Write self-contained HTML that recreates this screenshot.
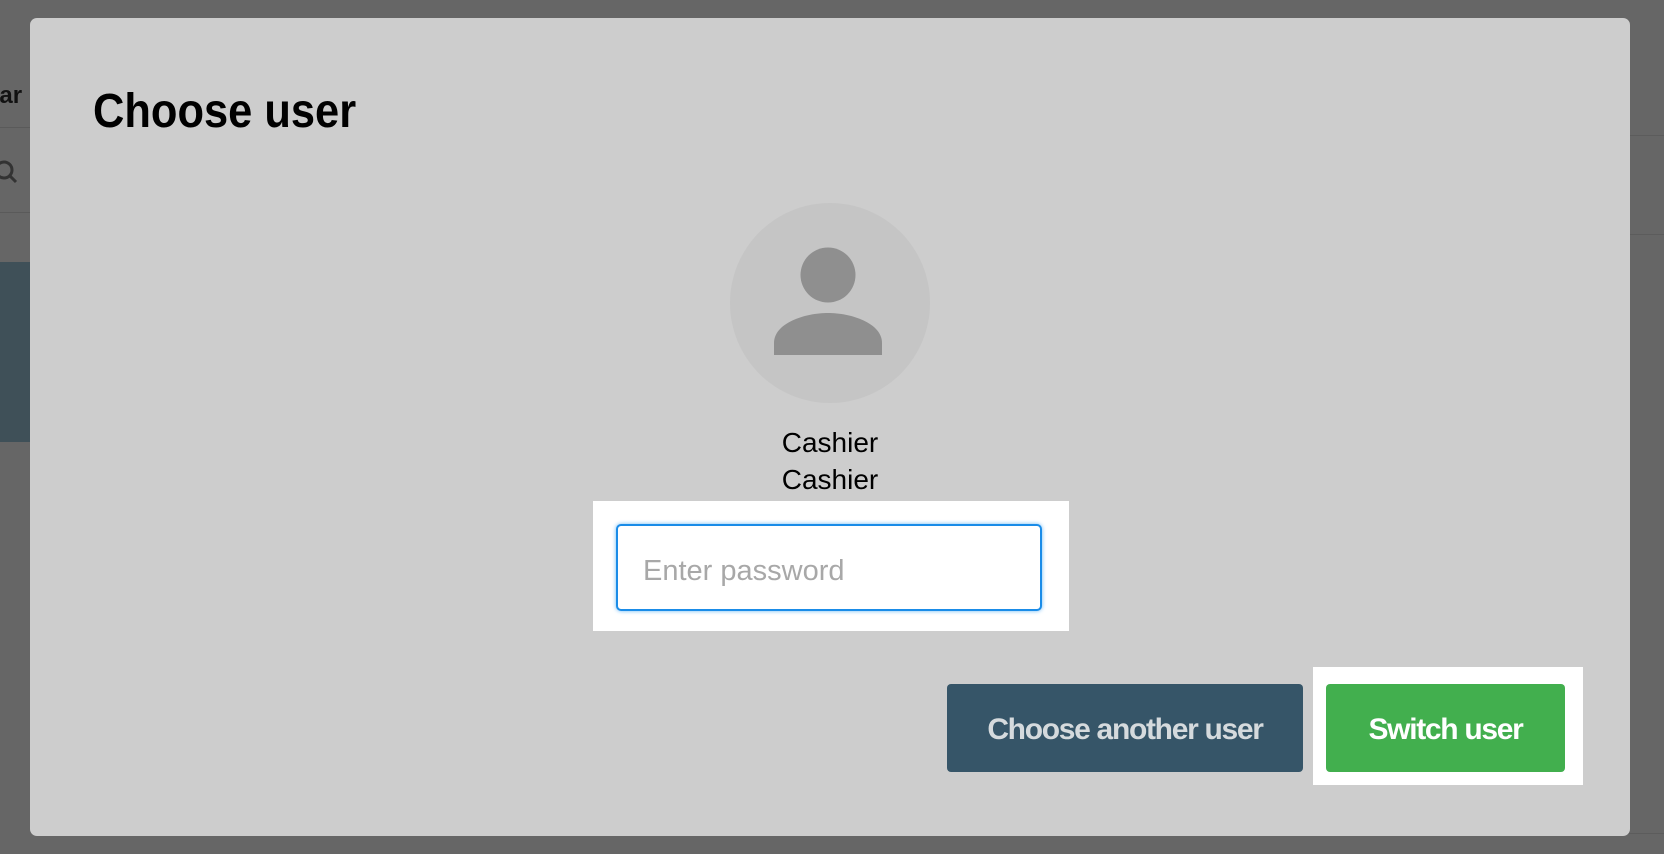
<!DOCTYPE html>
<html><head><meta charset="utf-8"><style>
html,body{margin:0;padding:0;width:1664px;height:854px;overflow:hidden;background:#666;font-family:"Liberation Sans",sans-serif;position:relative}
.a{position:absolute}
</style></head><body>
<div class="a" style="left:0;top:82px;font-size:24px;font-weight:bold;color:#111;left:-14px">ear</div>
<div class="a" style="left:0;top:127px;width:30px;height:1px;background:#5a5a5a"></div>
<div class="a" style="left:0;top:212px;width:30px;height:1px;background:#5a5a5a"></div>
<svg class="a" style="left:-8px;top:158px" width="30" height="30" viewBox="0 0 30 30"><circle cx="12" cy="12" r="8" fill="none" stroke="#333" stroke-width="3"/><path d="M18 18l6 6" stroke="#333" stroke-width="3"/></svg>
<div class="a" style="left:0;top:262px;width:30px;height:180px;background:#3f5058"></div>
<div class="a" style="left:1630px;top:135px;width:34px;height:1px;background:#5c5c5c"></div>
<div class="a" style="left:1630px;top:234px;width:34px;height:1px;background:#5c5c5c"></div>
<div class="a" style="left:1190px;top:833px;width:474px;height:1px;background:#5c5c5c"></div>

<div class="a" style="left:30px;top:18px;width:1600px;height:818px;background:#cdcdcd;border-radius:7px"></div>
<div class="a" style="left:93px;top:84px;font-size:48px;font-weight:bold;color:#000;transform:scaleX(0.905);transform-origin:0 0">Choose user</div>
<div class="a" style="left:730px;top:203px;width:200px;height:200px;border-radius:50%;background:#c5c5c5"></div>
<svg class="a" style="left:730px;top:203px" width="200" height="200" viewBox="0 0 200 200">
<circle cx="98" cy="72" r="27.5" fill="#8f8f8f"/>
<path d="M44 152 L44 140 C44 120 75 110 98 110 C121 110 152 120 152 140 L152 152 Z" fill="#8f8f8f"/>
</svg>
<div class="a" style="left:680px;top:424px;width:300px;text-align:center;font-size:28px;line-height:37px;color:#000">Cashier<br>Cashier</div>
<div class="a" style="left:593px;top:501px;width:476px;height:130px;background:#fff"></div>
<div class="a" style="left:616px;top:524px;width:422px;height:83px;border:2px solid #1a8ce8;border-radius:5px;background:#fff;box-shadow:0 0 4px #6ab8f5"></div>
<div class="a" style="left:643px;top:555px;font-size:29px;color:#a8a8a8">Enter password</div>
<div class="a" style="left:947px;top:684px;width:356px;height:88px;background:#365568;border-radius:4px;color:#d5dadd;font-size:30px;font-weight:bold;letter-spacing:-1.3px;text-align:center;line-height:92px">Choose another user</div>
<div class="a" style="left:1313px;top:667px;width:270px;height:118px;background:#fff"></div>
<div class="a" style="left:1326px;top:684px;width:239px;height:88px;background:#42af4e;border-radius:4px;color:#fff;font-size:30px;font-weight:bold;letter-spacing:-1.3px;text-align:center;line-height:92px">Switch user</div>
</body></html>
